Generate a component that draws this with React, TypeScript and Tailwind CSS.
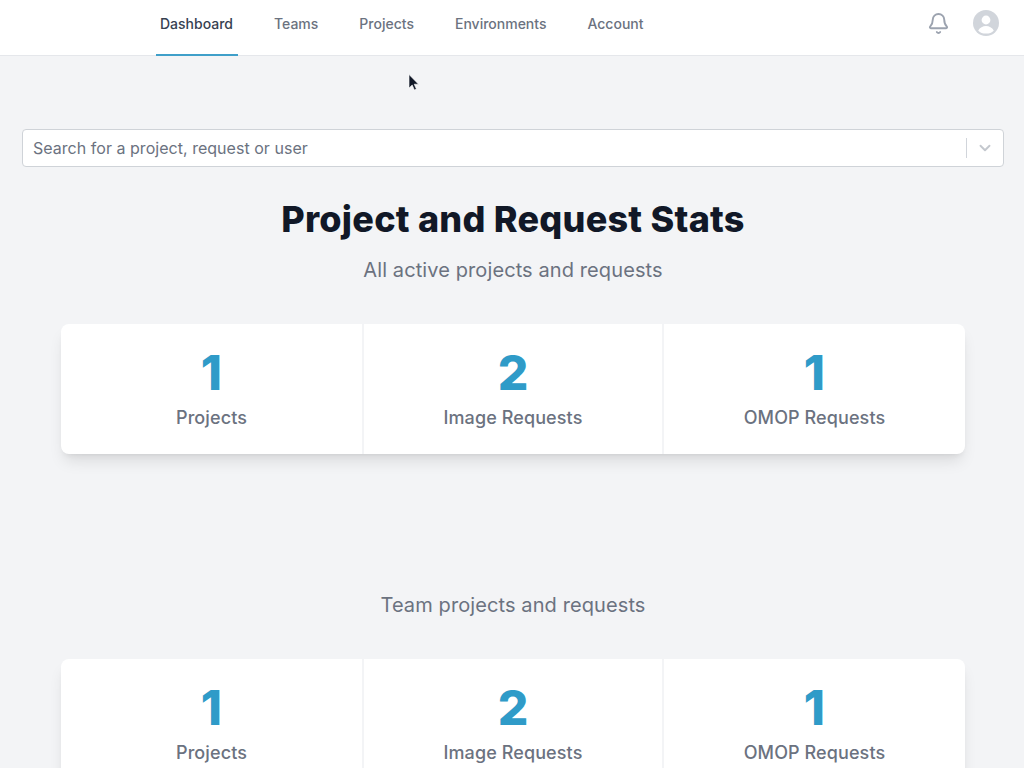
import { Bell, ChevronDown } from "lucide-react";

const tabs = ["Dashboard", "Teams", "Projects", "Environments", "Account"];

const stats = [
  { value: 1, label: "Projects" },
  { value: 2, label: "Image Requests" },
  { value: 1, label: "OMOP Requests" },
];

const StatsCard = () => (
  <div className="mx-[59px] grid grid-cols-[303px_300px_301px] divide-x-2 divide-[#f3f4f6] rounded-lg bg-white shadow-lg">
    {stats.map((stat) => (
      <div key={stat.label} className="flex h-[130px] flex-col items-center pt-[19px]">
        <span className="text-5xl leading-[60px] font-extrabold text-[#2f9bc8]">{stat.value}</span>
        <span className="mt-[1px] text-lg leading-7 font-medium text-[#6b7280]">{stat.label}</span>
      </div>
    ))}
  </div>
);

export default function App() {
  return (
    <div className="relative h-[768px] overflow-hidden bg-[#f3f4f6] font-['Inter',sans-serif] tracking-[0.1px]">
      <nav className="flex h-[56px] items-stretch justify-between border-b border-[#e5e7eb] bg-white pr-[25px] pl-[156px] tracking-normal">
        <div className="flex gap-[33px]">
          {tabs.map((tab, i) => (
            <a
              key={tab}
              className={
                i === 0
                  ? "-mr-px -mb-px flex w-[82px] items-center border-b-2 border-[#3f9fc9] pb-[7px] pl-1 text-sm font-medium text-[#374151]"
                  : "flex items-center px-1 pb-[7px] text-sm font-medium text-[#6b7280]"
              }
            >
              {tab}
            </a>
          ))}
        </div>
        <div className="flex items-center gap-[23px] pb-[9px]">
          <Bell className="h-[23px] w-[23px] text-[#9ca3af]" strokeWidth={2} />
          <svg viewBox="0 0 26 26" className="h-[26px] w-[26px]">
            <circle cx="13" cy="13" r="13" fill="#d1d5db" />
            <circle cx="13" cy="10" r="4.4" fill="#fff" />
            <path d="M5.2 20.4c1.7-2.7 4.6-4.3 7.8-4.3s6.1 1.6 7.8 4.3A10.4 10.4 0 0 1 13 23.6a10.4 10.4 0 0 1-7.8-3.2z" fill="#fff" />
          </svg>
        </div>
      </nav>

      <main className="pt-[73px] pl-[2px]">
        <div className="mx-[20px] flex h-[38px] items-center rounded border border-[#cfd3d8] bg-white pr-[9px] pl-[10px]">
          <span className="flex-1 text-base tracking-[0.03px] text-[#6b7280]">Search for a project, request or user</span>
          <span className="h-[20px] w-px bg-[#d1d5db]" />
          <ChevronDown className="ml-[9px] h-[18px] w-[18px] text-[#c4c8ce]" strokeWidth={2.5} />
        </div>

        <h1 className="mt-[30px] text-center text-4xl leading-[44px] font-extrabold tracking-[0.24px] text-[#111827]">
          Project and Request Stats
        </h1>
        <p className="mt-[15px] text-center text-xl leading-7 text-[#6b7280]">All active projects and requests</p>
        <div className="mt-[40px]">
          <StatsCard />
        </div>

        <p className="mt-[137px] text-center text-xl leading-7 text-[#6b7280]">Team projects and requests</p>
        <div className="mt-[40px]">
          <StatsCard />
        </div>
      </main>

      {/* mouse pointer caught in the capture */}
      <svg viewBox="0 0 12 18" className="absolute top-[73px] left-[408px] h-[19px] w-[12px]">
        <path d="M1 1v13.5l3.2-3 2.2 5 2-.9-2.2-4.9h4.3z" fill="#111827" stroke="#fff" strokeWidth="0.6" />
      </svg>
    </div>
  );
}
